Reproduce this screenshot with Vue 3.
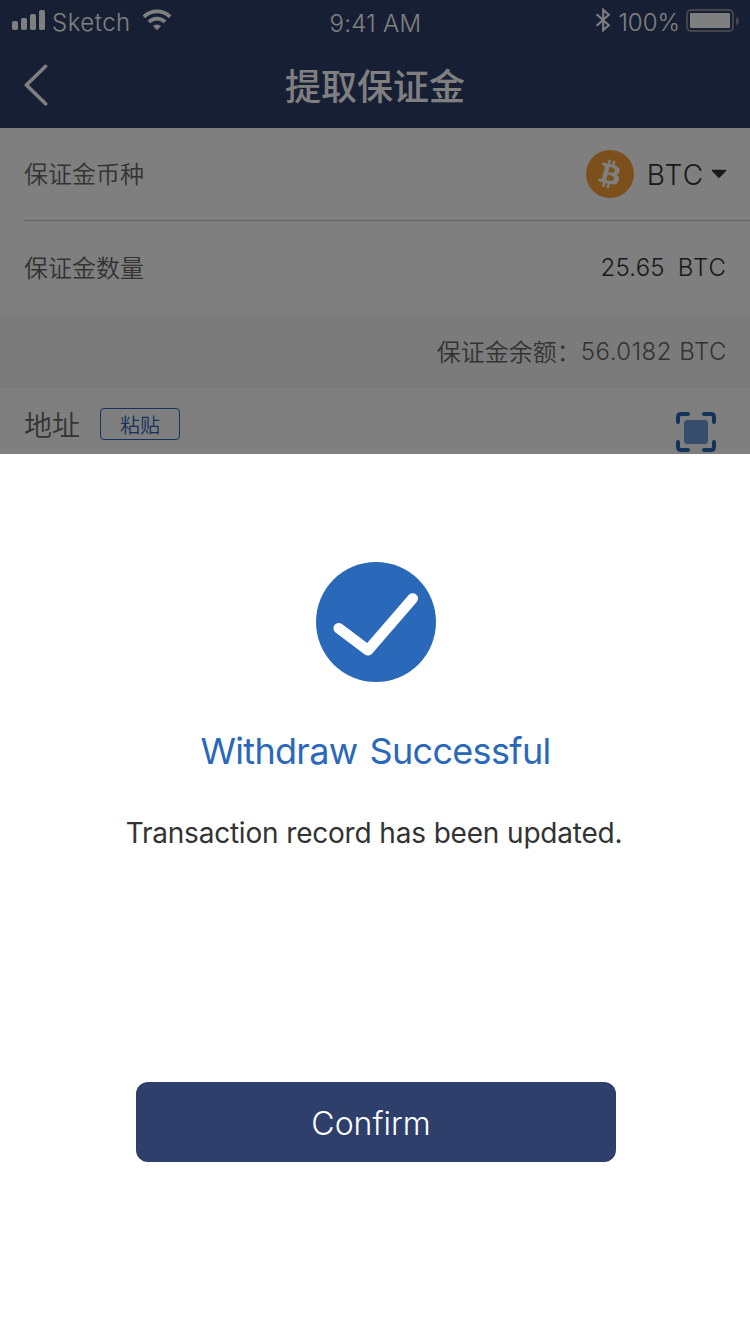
<script setup>
const signalBars = [
  { x: 0, h: 9 },
  { x: 9, h: 12 },
  { x: 18, h: 16 },
  { x: 27, h: 20 },
]
</script>

<template>
  <main class="screen">
    <header class="header">
      <div class="status">
        <div class="status-left">
          <svg class="signal" width="33" height="20" viewBox="0 0 33 20">
            <rect v-for="b in signalBars" :key="b.x" :x="b.x" :y="20 - b.h" width="6" :height="b.h" rx="1.8" fill="#fff" />
          </svg>
          <span class="carrier">Sketch</span>
          <svg class="wifi" width="30" height="22" viewBox="0 0 30 22">
            <g fill="none" stroke="#fff" stroke-width="3.8">
              <path d="M1.9 7.8A18.6 18.6 0 0 1 28.1 7.8" />
              <path d="M6.9 12.9A11.6 11.6 0 0 1 23.1 12.9" />
            </g>
            <path d="M15 21.2L10.9 17.1A5.9 5.9 0 0 1 19.1 17.1Z" fill="#fff" />
          </svg>
        </div>
        <span class="clock">9:41 AM</span>
        <div class="status-right">
          <svg class="bluetooth" width="16" height="24" viewBox="0 0 16 24">
            <path d="M1.6 6.2L13.8 17.2L8.2 22.2V1.8L13.8 6.8L1.6 17.8" fill="none" stroke="#fff" stroke-width="2.1" />
          </svg>
          <span class="percent">100%</span>
          <svg class="battery" width="53" height="23" viewBox="0 0 53 23">
            <rect x="1" y="1" width="46" height="21" rx="4" fill="none" stroke="#868b95" stroke-width="2" />
            <rect x="4" y="4" width="40" height="15" rx="1" fill="#fff" />
            <path d="M50 8Q53 9 53 12T50 16Z" fill="#868b95" />
          </svg>
        </div>
      </div>
      <div class="nav">
        <svg class="back" width="26" height="44" viewBox="0 0 26 44">
          <path d="M21.6 3.3L2.4 22L21.6 40.7" fill="none" stroke="#fff" stroke-width="3.6" stroke-linecap="round" stroke-linejoin="round" />
        </svg>
        <h1>提取保证金</h1>
      </div>
    </header>

    <section class="row coin-row">
      <span class="label">保证金币种</span>
      <div class="coin">
        <svg width="48" height="48" viewBox="0 0 48 48">
          <circle cx="24" cy="24" r="24" fill="#f7a034" />
          <path transform="translate(.2 .8) scale(1.44)" fill="#fff" d="M23.189 14.02c.314-2.096-1.283-3.223-3.465-3.975l.708-2.84-1.728-.43-.69 2.765c-.454-.114-.92-.22-1.385-.326l.695-2.783L15.596 6l-.708 2.839c-.376-.086-.746-.17-1.104-.26l.002-.009-2.384-.595-.46 1.846s1.283.294 1.256.312c.7.175.826.638.805 1.006l-.806 3.235c.048.012.11.03.18.057l-.183-.045-1.13 4.532c-.086.212-.303.531-.793.41.018.025-1.256-.313-1.256-.313l-.858 1.978 2.25.561c.418.105.828.215 1.231.318l-.715 2.872 1.727.43.708-2.84c.472.127.93.245 1.378.357l-.706 2.828 1.728.43.715-2.866c2.948.558 5.164.333 6.097-2.333.752-2.146-.037-3.385-1.588-4.192 1.13-.26 1.98-1.003 2.207-2.538zm-3.95 5.538c-.533 2.147-4.148.986-5.32.695l.95-3.805c1.172.293 4.929.872 4.37 3.11zm.535-5.569c-.487 1.953-3.495.96-4.47.717l.86-3.45c.975.243 4.118.696 3.61 2.733z" />
        </svg>
        <span class="coin-name">BTC</span>
        <svg class="caret" width="16" height="10" viewBox="0 0 16 10">
          <path d="M1 .8H15Q15.6 1.3 15 2L8.8 8.6Q8 9.3 7.2 8.6L1 2Q.4 1.3 1 .8Z" fill="#333" />
        </svg>
      </div>
    </section>
    <section class="row amount-row">
      <span class="label">保证金数量</span>
      <div class="amount"><span class="figure">25.65</span><span>BTC</span></div>
    </section>
    <section class="balance">
      <span class="balance-label">保证金余额：</span><span class="balance-value">56.0182 BTC</span>
    </section>
    <section class="address">
      <span class="address-label">地址</span>
      <button class="paste">粘贴</button>
      <svg class="scan" width="40" height="40" viewBox="0 0 40 40">
        <path d="M2 10V5Q2 2 5 2H12M28 2H35Q38 2 38 5V10M38 30V35Q38 38 35 38H28M12 38H5Q2 38 2 35V30" fill="none" stroke="#2a68b9" stroke-width="4" stroke-linecap="round" />
        <rect x="8" y="8" width="24" height="24" rx="3.5" fill="#6c9adb" />
      </svg>
    </section>

    <div class="mask"></div>
    <section class="sheet">
      <svg class="success" width="120" height="120" viewBox="0 0 120 120">
        <circle cx="60" cy="60" r="60" fill="#2a68b9" />
        <path d="M22.7 66.2L52 88.3L96.7 36.5" fill="none" stroke="#fff" stroke-width="10.6" stroke-linecap="round" stroke-linejoin="round" />
      </svg>
      <h2>Withdraw Successful</h2>
      <p>Transaction record has been updated.</p>
      <button class="confirm">Confirm</button>
    </section>
  </main>
</template>

<style>
html, body { margin: 0; background: #fff; }
</style>

<style scoped>
.screen {
  position: relative;
  width: 750px;
  height: 1334px;
  overflow: hidden;
  background: #fff;
  font-family: Inter, "Noto Sans CJK SC", sans-serif;
  color: #333;
}
.screen * { box-sizing: border-box; }
.screen span { white-space: nowrap; }
svg { display: block; flex: none; }
h1, h2, p { margin: 0; font-weight: 400; }
button { font-family: inherit; padding: 0; margin: 0; }

.header { height: 128px; background: #2f3f6b; color: #fff; }
.status {
  height: 44px;
  display: grid;
  grid-template-columns: 1fr auto 1fr;
  align-items: start;
  padding: 0 11px 0 12px;
  font-size: 24px;
  line-height: 30px;
  font-weight: 300;
}
.status-left, .status-right { display: flex; align-items: flex-start; }
.status-right { justify-content: flex-end; }
.signal { margin-top: 10px; }
.carrier { margin: 8px 0 0 7px; letter-spacing: .5px; }
.wifi { margin: 9px 0 0 11px; }
.clock { margin-top: 9px; letter-spacing: .3px; }
.bluetooth { margin-top: 8px; }
.percent { margin: 8px 6px 0 7px; }
.battery { margin-top: 9px; }
.nav { height: 84px; display: grid; grid-template-columns: 100px 1fr 100px; align-items: start; }
.back { margin: 19px 0 0 24px; }
h1 { margin-top: 16px; text-align: center; font-size: 36px; line-height: 54px; font-weight: 500; }

.row { display: flex; align-items: center; justify-content: space-between; }
.label { padding-top: 2px; font-size: 24px; line-height: 36px; font-weight: 350; color: #666; }
.coin-row { height: 93px; margin-left: 24px; padding-right: 23px; border-bottom: 1px solid #c8c8c8; }
.coin { display: flex; align-items: center; }
.coin-name { margin-left: 10px; width: 63px; padding-top: 1px; text-align: center; font-size: 28px; font-weight: 300; line-height: 40px; letter-spacing: 1.2px; }
.caret { margin-left: 4px; }
.amount-row { height: 93px; padding: 0 23px 0 24px; }
.amount { display: flex; gap: 13px; font-size: 24px; font-weight: 300; letter-spacing: 1px; }
.figure { letter-spacing: .2px; }
.balance { height: 74px; padding: 2px 23px 0 24px; display: flex; align-items: center; justify-content: flex-end; background: #f7f7f7; color: #666; font-size: 24px; line-height: 36px; font-weight: 350; }
.balance-label { padding-top: 1px; }
.balance-value { letter-spacing: .5px; }
.address { height: 66px; padding: 0 34px 0 24px; display: flex; align-items: flex-start; }
.address-label { margin-top: 18px; font-size: 28px; line-height: 40px; font-weight: 350; color: #666; }
.paste { width: 80px; height: 32px; margin: 20px 0 0 20px; padding-top: 4px; border: 1px solid #2a68b9; border-radius: 4px; background: transparent; color: #2a68b9; font-size: 20px; line-height: 26px; font-weight: 350; }
.scan { margin: 24px 0 0 auto; }

.mask { position: absolute; left: 0; top: 0; width: 750px; height: 454px; background: rgba(0, 0, 0, .5); }
.sheet {
  position: absolute;
  left: 0;
  top: 454px;
  width: 750px;
  height: 880px;
  background: #fff;
  display: flex;
  flex-direction: column;
  align-items: center;
}
.success { margin: 108px 0 0 2px; }
h2 { margin: 44px 0 0 1px; font-size: 36px; line-height: 50px; color: #2a68b9; letter-spacing: -.68px; word-spacing: 2.5px; }
p { margin: 37px 2px 0 0; font-size: 28px; line-height: 40px; letter-spacing: -.22px; word-spacing: .3px; }
.confirm { width: 480px; height: 80px; margin: 229px 0 0 2px; padding: 3px 10px 0 0; border: 0; border-radius: 12px; background: #2f3f6b; color: #fff; font-size: 32px; font-weight: 300; line-height: 77px; }
</style>
